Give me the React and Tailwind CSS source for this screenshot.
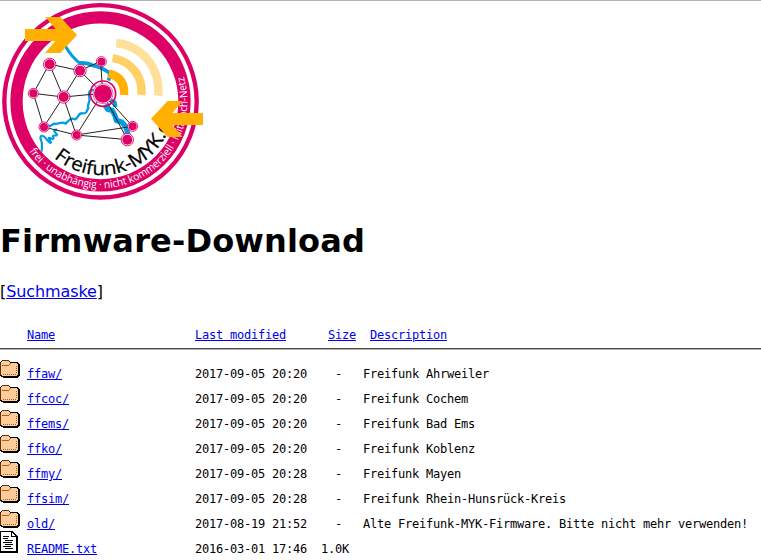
const rows = [
  ["ffaw/", "2017-09-05 20:20", "Freifunk Ahrweiler"],
  ["ffcoc/", "2017-09-05 20:20", "Freifunk Cochem"],
  ["ffems/", "2017-09-05 20:20", "Freifunk Bad Ems"],
  ["ffko/", "2017-09-05 20:20", "Freifunk Koblenz"],
  ["ffmy/", "2017-09-05 20:28", "Freifunk Mayen"],
  ["ffsim/", "2017-09-05 20:28", "Freifunk Rhein-Hunsrück-Kreis"],
  ["old/", "2017-08-19 21:52", "Alte Freifunk-MYK-Firmware. Bitte nicht mehr verwenden!"],
  ["README.txt", "2016-03-01 17:46", "", "1.0K"],
];

const links = [
  [148, 192, 239, 212], [148, 192, 100, 280], [148, 192, 190, 291], [239, 212, 302, 184],
  [239, 212, 190, 291], [239, 212, 308, 280], [302, 184, 308, 280], [100, 280, 190, 291],
  [100, 280, 131, 381], [190, 291, 308, 280], [190, 291, 131, 381], [190, 291, 229, 405],
  [131, 381, 229, 405], [308, 280, 229, 405], [308, 280, 398, 379], [308, 280, 382, 419],
  [229, 405, 398, 379], [229, 405, 382, 419],
];

const nodes = [
  [149, 193, 15, 18.5], [240, 212, 15, 18.5], [304, 185, 12, 15], [100, 280, 12, 15],
  [191, 291, 15, 18.5], [132, 381, 12, 15], [230, 405, 12, 15], [398, 379, 12, 15],
  [382, 419, 15, 18.5],
];

function Logo() {
  return (
    <svg className="block h-[205px] w-[210px]" viewBox="0 0 630 615">
      <defs>
        <path id="ringText" d="M87.7 453.7A261 261 0 0 0 527.5 173.5" />
        <path id="nameText" d="M162 473A219 219 0 0 0 510 232" />
      </defs>
      <circle cx="301.5" cy="304" r="288.5" fill="#fff" stroke="#dc0067" strokeWidth="13" />
      <circle cx="301.5" cy="304" r="252" fill="#fff" stroke="#dc0067" strokeWidth="37" />
      <g fill="none" stroke="#009ee0" strokeLinejoin="round">
        <path strokeWidth="9" d="M196 138Q214 170 240 190" />
        <path strokeWidth="11" d="M236 189Q262 187 280 197Q300 200 326 217Q331 222 326 242" />
        <path strokeWidth="7" d="M290 272C270 266 264 274 268 292C272 306 260 312 265 324C258 335 262 341 248 340C232 338 238 354 225 358C212 352 208 360 197 371C186 362 176 374 162 371Q150 381 138 380" />
        <path strokeWidth="16" d="M315 314L323 328L337 331L346 349L349 361L365 366L379 382L384 408" />
        <path strokeWidth="12" d="M327 298L344 307L346 321" />
        <path strokeWidth="6.5" d="M172 389C160 388 160 394 168 400C178 411 158 403 159 409C165 424 151 412 146 414C161 437 147 429 138 416C128 403 117 405 123 420C129 432 125 440 125 455" />
      </g>
      <g stroke="#111" strokeWidth="2.8">
        {links.map(([a, b, c, d], i) => <line key={i} x1={a} y1={b} x2={c} y2={d} />)}
      </g>
      {nodes.map(([x, y, r, ring], i) => (
        <g key={i}>
          <circle cx={x} cy={y} r={ring} fill="#fff" stroke="#dc0067" strokeWidth="2.7" />
          <circle cx={x} cy={y} r={r} fill="#dc0067" />
        </g>
      ))}
      <circle cx="309" cy="281" r="38" fill="none" stroke="#dc0067" strokeWidth="5" />
      <circle cx="309" cy="281" r="30" fill="#fff" stroke="#dc0067" strokeWidth="1.8" />
      <circle cx="309" cy="281" r="27" fill="#dc0067" />
      <g fill="none" strokeWidth="25">
        <path stroke="#ffb000" d="M326 221Q376 232 372 285" />
        <path stroke="#ffd066" d="M338 174C395 184 430 230 424 285" />
        <path stroke="#ffe09b" d="M349 129C428 138 481 205 475 287" />
      </g>
      <text className="font-['Open_Sans',sans-serif]" fontSize="32" fill="#fff">
        <textPath href="#ringText" textLength="735" lengthAdjust="spacingAndGlyphs">frei · unabhängig · nicht kommerziell · Mitmach-Netz</textPath>
      </text>
      <text className="font-['Open_Sans',sans-serif]" fontSize="57" fill="#000" stroke="#000" strokeWidth="0.8">
        <textPath href="#nameText" textLength="468" lengthAdjust="spacingAndGlyphs">Freifunk-MYK.de</textPath>
      </text>
      <g fill="#ffb000">
        <path d="M75 87H167L136 51H181L231 105L181 159H135L166 123H75Z" />
        <path d="M609 339H517L548 303H503L453 356L503 411H548L517 375H609Z" />
      </g>
    </svg>
  );
}

function Folder() {
  return (
    <svg className="h-[22px] w-5" viewBox="0 0 20 22" shapeRendering="crispEdges">
      <path fill="#000" d="M2 4H9V5H10V6H18V7H19V8H20V20H19V21H18V22H3V21H1V20H0V6H1V5H2Z" />
      <path fill="#663300" d="M0 7H1V19H0ZM2 4H9V5H2Z" />
      <path fill="#ffcc99" d="M2 5H9V6H10V7H17V8H18V19H17V20H2V19H1V6H2Z" />
      <path fill="#996633" d="M2 9H9V8H10V7H11V8H10V9H9V10H2ZM3 18H4V19H3ZM5 18H6V19H5ZM7 18H8V19H7ZM9 18H10V19H9ZM11 18H12V19H11ZM13 18H14V19H13ZM15 18H16V19H15ZM16 16H17V17H16ZM16 14H17V15H16ZM16 12H17V13H16ZM16 10H17V11H16Z" />
    </svg>
  );
}

function TextFile() {
  return (
    <svg className="h-[22px] w-5" viewBox="0 0 20 22" shapeRendering="crispEdges">
      <path fill="#000" d="M0 0H13V1H14V2H15V3H16V4H17V5H18V22H0Z" />
      <path fill="#fff" d="M1 1H11V6H16V20H1ZM12 2H13V3H14V4H15V5H12Z" />
      <path fill="#000" d="M3 5H9V6H3ZM3 7H8V8H3ZM5 9H13V10H5ZM3 11H12V12H3ZM5 13H13V14H5ZM3 15H11V16H3ZM5 17H13V18H5Z" />
    </svg>
  );
}

export default function App() {
  return (
    <div className="h-[560px] w-[761px] overflow-hidden border-t border-[#b3b3b3] bg-white font-['DejaVu_Sans',sans-serif] text-black">
      <div className="-mt-px h-[205px]"><Logo /></div>
      <h1 className="mt-[17px] h-[38px] text-[32px] leading-[38px] font-bold tracking-[0.17px]">Firmware-Download</h1>
      <p className="mt-[22px] h-5 text-base leading-5 tracking-[-0.1px]">[<a href="#" className="text-[#0000ee] underline">Suchmaske</a>]</p>
      <div className="mt-6 font-['DejaVu_Sans_Mono',monospace] text-[12px] tracking-[-0.224px] whitespace-pre">
        <div className="flex h-[22px] pl-[27px] leading-[18px] text-[#0000ee]">
          <span className="w-[168px]"><a href="#" className="underline">Name</a></span>
          <span className="w-[133px]"><a href="#" className="underline">Last modified</a></span>
          <span className="w-[42px]"><a href="#" className="underline">Size</a></span>
          <a href="#" className="underline">Description</a>
        </div>
        <hr className="h-0.5 border-x-0 border-t border-b border-t-[#4c4c4c] border-b-[#b0b0b0]" />
        <div className="pt-[6px]">
          {rows.map(([name, date, text, size]) => (
            <div key={name} className="flex h-[25px] items-start">
              <span className="w-[27px]">{size ? <TextFile /> : <Folder />}</span>
              <span className="w-[168px] pt-[9px] leading-[18px]"><a href="#" className="text-[#0000ee] underline">{name}</a></span>
              <span className="w-[126px] pt-[9px] leading-[18px]">{date}</span>
              <span className="w-[42px] pt-[9px] leading-[18px]">{size || "  -"}</span>
              <span className="pt-[9px] leading-[18px]">{text}</span>
            </div>
          ))}
        </div>
      </div>
    </div>
  );
}
